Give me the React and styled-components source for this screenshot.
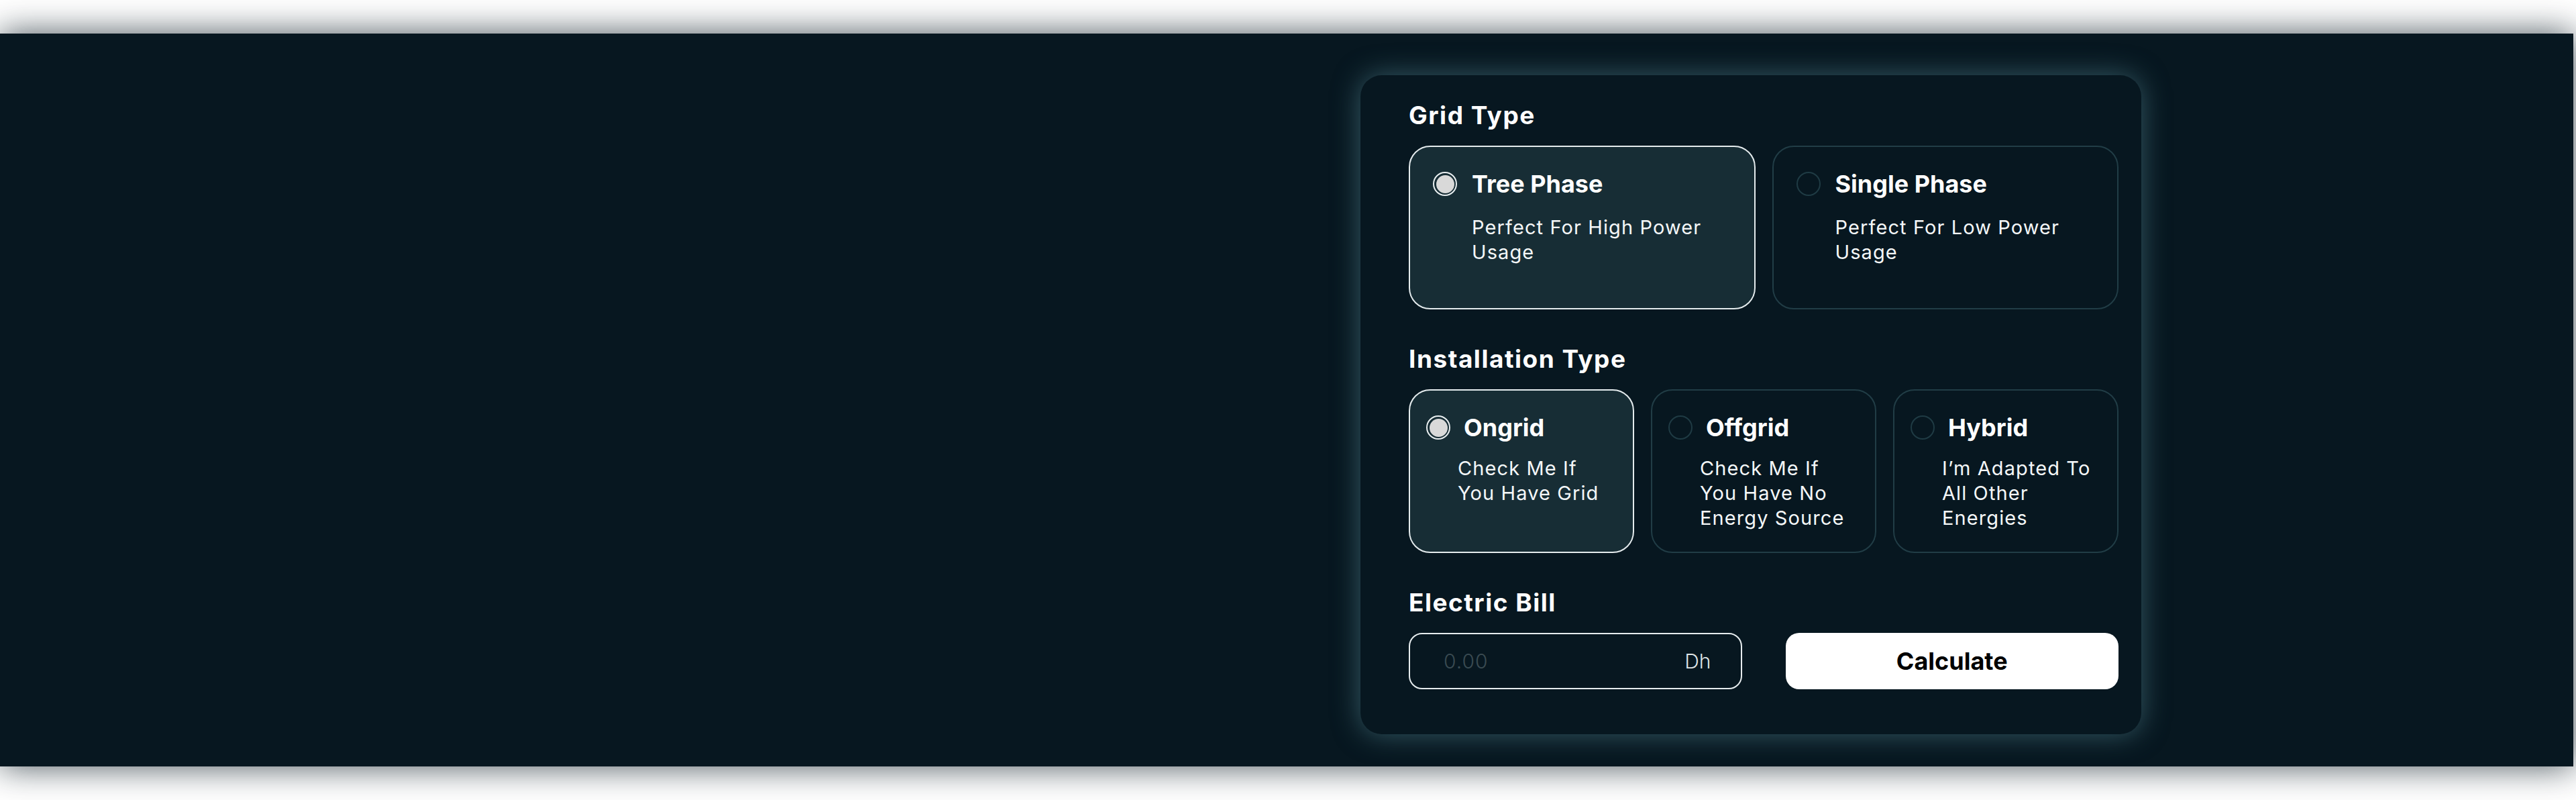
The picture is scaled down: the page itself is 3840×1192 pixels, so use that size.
import styled, { createGlobalStyle } from "styled-components";

const GlobalStyle = createGlobalStyle`
  body {
    margin: 0;
    background: #ffffff;
    font-family: Inter, "Noto Sans", sans-serif;
  }
`;

const gridTypes = [
  { id: "tree", title: "Tree Phase", text: "Perfect For High Power Usage" },
  { id: "single", title: "Single Phase", text: "Perfect For Low Power Usage" },
];

// line breaks follow the design
const installTypes = [
  { id: "ongrid", title: "Ongrid", text: "Check Me If\nYou Have Grid" },
  { id: "offgrid", title: "Offgrid", text: "Check Me If\nYou Have No\nEnergy Source" },
  { id: "hybrid", title: "Hybrid", text: "I’m Adapted To\nAll Other\nEnergies" },
];

const Option = ({ title, text, checked, compact }) => (
  <OptionCard $checked={checked} $compact={compact}>
    <OptionHead $compact={compact}>
      <Radio $checked={checked} />
      <OptionTitle>{title}</OptionTitle>
    </OptionHead>
    <OptionText $compact={compact}>{text}</OptionText>
  </OptionCard>
);

const App = () => {
  return (
    <Page>
      <GlobalStyle />
      <Hero>
        <HeroArt />
        <Card>
          <Section>
            <Heading>Grid Type</Heading>
            <Options $cols={2}>
              {gridTypes.map((o, i) => (
                <Option key={o.id} {...o} checked={i === 0} />
              ))}
            </Options>
          </Section>

          <Section>
            <Heading>Installation Type</Heading>
            <Options $cols={3}>
              {installTypes.map((o, i) => (
                <Option key={o.id} {...o} checked={i === 0} compact />
              ))}
            </Options>
          </Section>

          <Section>
            <Heading>Electric Bill</Heading>
            <BillRow>
              <InputBox>
                <BillInput placeholder="0.00" />
                <Unit>Dh</Unit>
              </InputBox>
              <CalcButton>Calculate</CalcButton>
            </BillRow>
          </Section>
        </Card>
      </Hero>
    </Page>
  );
};

export default App;

// Styled components
const Page = styled.div`
  padding: 50px 0;
`;

const Hero = styled.div`
  display: flex;
  align-items: flex-start;
  box-sizing: border-box;
  height: 1092px;
  margin-right: 4px;
  padding: 62px 644px 0 0;
  background: #071720;
  box-shadow: 0 0 48px rgba(7, 23, 32, 0.75);
`;

const HeroArt = styled.div`
  flex: 1;
`;

const Card = styled.div`
  box-sizing: border-box;
  width: 1164px;
  height: 982px;
  padding: 38px 34px 0 72px;
  border-radius: 32px;
  background: #071720;
  box-shadow: 0 0 40px rgba(72, 118, 130, 0.7);
  display: flex;
  flex-direction: column;
  gap: 52px;
`;

const Section = styled.section`
  display: flex;
  flex-direction: column;
  gap: 23px;
`;

const Heading = styled.h2`
  margin: 0;
  font-size: 37px;
  line-height: 44px;
  font-weight: 700;
  letter-spacing: 1.5px;
  color: #ffffff;
`;

const Options = styled.div`
  display: grid;
  grid-template-columns: repeat(${(p) => p.$cols}, minmax(0, 1fr));
  gap: 25px;
`;

const OptionCard = styled.div`
  box-sizing: border-box;
  height: 244px;
  padding: 33px 20px 0 ${(p) => (p.$compact ? 24 : 34)}px;
  border: 2px solid ${(p) => (p.$checked ? "#e4ebed" : "#213d46")};
  border-radius: 32px;
  background: ${(p) => (p.$checked ? "#172d35" : "transparent")};
`;

const OptionHead = styled.div`
  display: flex;
  align-items: center;
  gap: ${(p) => (p.$compact ? 20 : 22)}px;
`;

const Radio = styled.span`
  position: relative;
  flex: none;
  box-sizing: border-box;
  width: 36px;
  height: 36px;
  border-radius: 50%;
  border: 2px solid ${(p) => (p.$checked ? "#e8eef0" : "#1f3b44")};

  &::after {
    content: "";
    position: absolute;
    inset: 2.5px;
    border-radius: 50%;
    background: ${(p) => (p.$checked ? "#d9d9d9" : "transparent")};
  }
`;

const OptionTitle = styled.div`
  font-size: 36px;
  line-height: 44px;
  font-weight: 700;
  color: #ffffff;
`;

const OptionText = styled.p`
  margin: ${(p) => (p.$compact ? 20 : 24)}px 0 0;
  padding-left: ${(p) => (p.$compact ? 47 : 58)}px;
  max-width: 390px;
  white-space: pre-line;
  font-size: 29px;
  line-height: 37px;
  font-weight: 400;
  letter-spacing: 1.1px;
  color: #f4f7f8;
`;

const BillRow = styled.div`
  display: grid;
  grid-template-columns: repeat(2, minmax(0, 1fr));
  gap: 65px;
`;

const InputBox = styled.label`
  box-sizing: border-box;
  min-width: 0;
  height: 84px;
  display: flex;
  align-items: center;
  padding: 0 44px 0 50px;
  border: 2px solid #e6ecee;
  border-radius: 20px;
`;

const BillInput = styled.input`
  flex: 1;
  width: 100%;
  min-width: 0;
  padding: 0;
  border: none;
  outline: none;
  background: transparent;
  font-family: inherit;
  font-size: 30px;
  font-weight: 300;
  letter-spacing: 1px;
  color: #ffffff;

  &::placeholder {
    color: #3a4b52;
  }
`;

const Unit = styled.span`
  font-size: 30px;
  font-weight: 300;
  color: #dfe5e7;
`;

const CalcButton = styled.button`
  height: 84px;
  border: none;
  border-radius: 20px;
  background: #ffffff;
  color: #000000;
  font-family: inherit;
  font-size: 36px;
  font-weight: 700;
  cursor: pointer;
`;
